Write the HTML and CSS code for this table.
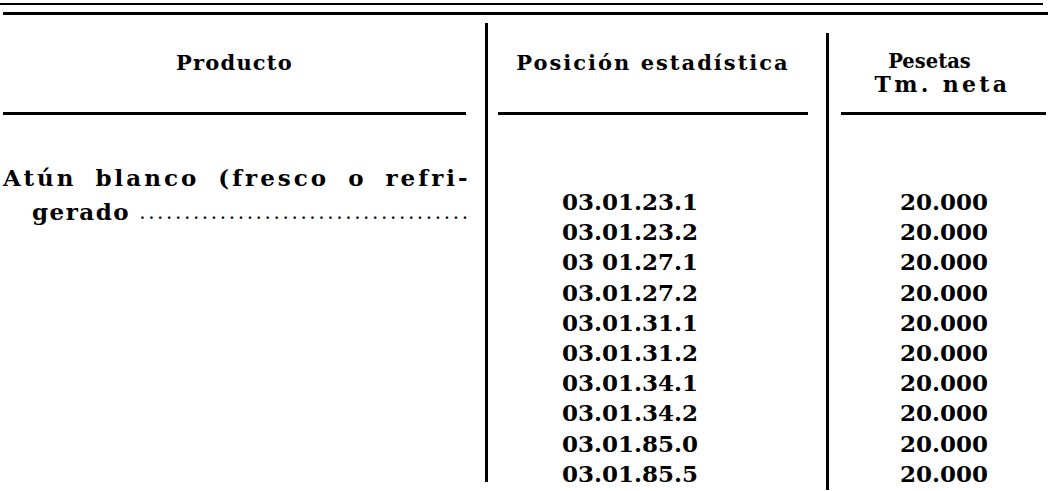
FILE: index.html
```html
<!DOCTYPE html>
<html lang="es">
<head>
<meta charset="utf-8">
<title>Atún blanco</title>
<link rel="stylesheet" href="styles.css">
</head>
<body>
<div class="sheet">
  <div class="rule-a"></div>
  <div class="rule-b"></div>
  <div class="table">
    <div class="hcell h1">Producto</div>
    <div class="vrule vrule1"></div>
    <div class="hcell h2">Posición estadística</div>
    <div class="vrule vrule2"></div>
    <div class="hcell h3"><span class="h3a">Pesetas</span><span class="h3b">Tm. neta</span></div>

    <div class="bcell product">
      <div class="pline">Atún blanco (fresco o refri-</div>
      <div class="pline indent"><span class="word">gerado</span><span class="leader">.....................................</span></div>
    </div>
    <div class="bcell codes">
      <div>03.01.23.1</div>
      <div>03.01.23.2</div>
      <div>03 01.27.1</div>
      <div>03.01.27.2</div>
      <div>03.01.31.1</div>
      <div>03.01.31.2</div>
      <div>03.01.34.1</div>
      <div>03.01.34.2</div>
      <div>03.01.85.0</div>
      <div>03.01.85.5</div>
    </div>
    <div class="bcell prices">
      <div>20.000</div>
      <div>20.000</div>
      <div>20.000</div>
      <div>20.000</div>
      <div>20.000</div>
      <div>20.000</div>
      <div>20.000</div>
      <div>20.000</div>
      <div>20.000</div>
      <div>20.000</div>
    </div>
  </div>
</div>
</body>
</html>
```

FILE: styles.css
```css
html, body {
  margin: 0;
  padding: 0;
  background: #ffffff;
  color: #000000;
}

body {
  width: 1048px;
  height: 491px;
  overflow: hidden;
  font-family: "DejaVu Serif", "Liberation Serif", serif;
}

.sheet {
  padding-top: 3px;
}

.rule-a {
  height: 2px;
  background: #000;
  margin-right: 5px;
}

.rule-b {
  height: 3px;
  background: #000;
  margin-top: 7px;
  margin-left: 3px;
}

.table {
  display: grid;
  grid-template-columns: 485px 3px 338px 3px 1fr;
  grid-template-rows: 100px 1fr;
  height: 476px;
}

.hcell {
  display: flex;
  align-items: center;
  justify-content: center;
  border-bottom: 3px solid #000;
  font-size: 21px;
  font-weight: bold;
  letter-spacing: 1.2px;
  padding-bottom: 2px;
}

.h1 {
  grid-column: 1;
  grid-row: 1;
  margin: 0 19px 0 3px;
}

.h2 {
  grid-column: 3;
  grid-row: 1;
  margin: 0 18px 0 10px;
  letter-spacing: 2px;
}

.h3 {
  grid-column: 5;
  grid-row: 1;
  margin: 0 2px 0 12px;
  flex-direction: column;
  justify-content: flex-end;
  padding-bottom: 16px;
  line-height: 23px;
}

.h3 span {
  display: block;
}

.h3a {
  font-size: 19.5px;
  letter-spacing: 0;
  margin-right: 28px;
}

.h3b {
  font-size: 22px;
  letter-spacing: 3.3px;
  margin-right: 2px;
}

.vrule {
  background: #000;
  grid-row: 1 / 3;
}

.vrule1 {
  grid-column: 2;
  margin-top: 8px;
  margin-bottom: 9px;
}

.vrule2 {
  grid-column: 4;
  margin-top: 18px;
  margin-bottom: 1px;
}

.bcell {
  grid-row: 2;
}

.product {
  grid-column: 1;
  padding: 46px 0 0 3px;
  font-size: 23px;
  font-weight: bold;
  letter-spacing: 3px;
  word-spacing: 8px;
  line-height: 34px;
}

.pline {
  white-space: nowrap;
}

.indent {
  display: flex;
  padding-left: 29px;
}

.word {
  letter-spacing: 1.5px;
}

.leader {
  margin-left: 9px;
  letter-spacing: 2.6px;
  font-size: 20px;
  font-weight: normal;
}

.codes {
  grid-column: 3;
  padding: 72px 0 0 74px;
  font-weight: bold;
  font-size: 23px;
  line-height: 30.2px;
}

.prices {
  grid-column: 5;
  padding: 72px 0 0 71px;
  font-weight: bold;
  font-size: 23px;
  line-height: 30.2px;
}
```
